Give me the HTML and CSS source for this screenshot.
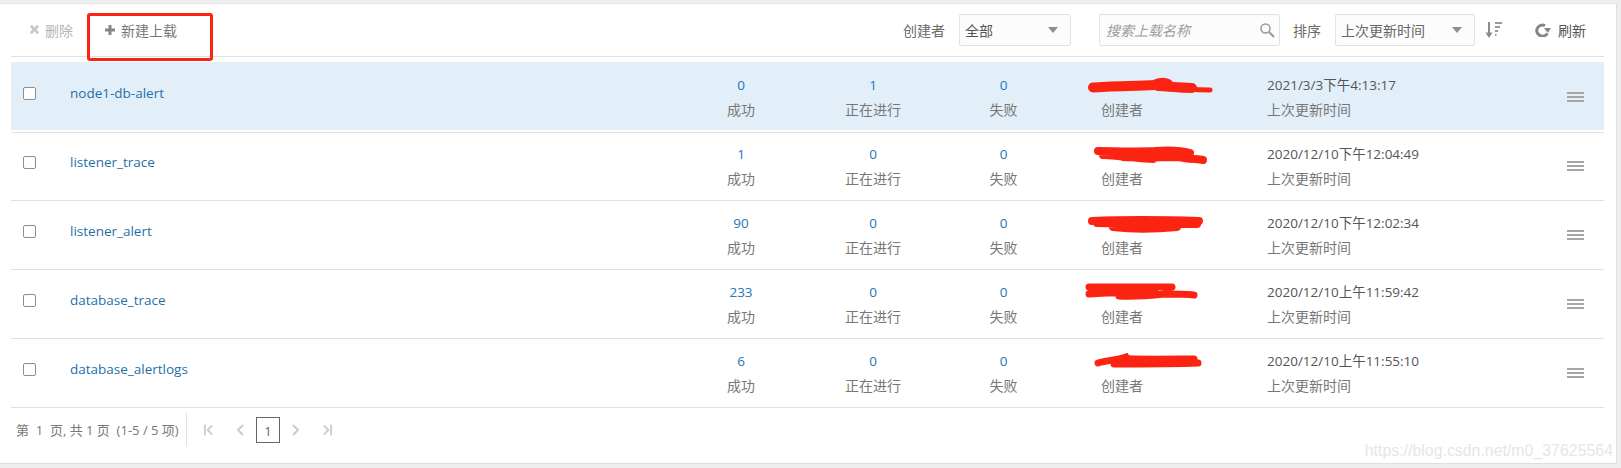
FILE: index.html
```html
<!DOCTYPE html>
<html lang="zh">
<head>
<meta charset="utf-8">
<title>上载</title>
<link rel="stylesheet" href="styles.css">
</head>
<body>
<main class="panel">
  <header class="toolbar">
    <button class="tool tool-delete"><svg class="ico" viewBox="0 0 12 12" width="11" height="11"><path d="M2 2l8 8M10 2l-8 8" stroke="#c8c8c8" stroke-width="3"/></svg>删除</button>
    <button class="tool tool-new"><svg class="ico" viewBox="0 0 12 12" width="12" height="12"><path d="M6 1v10M1 6h10" stroke="#858585" stroke-width="3"/></svg>新建上载</button>
    <div class="spacer"></div>
    <label class="flabel">创建者</label>
    <div class="select select-owner"><span>全部</span><i class="caret"></i></div>
    <div class="search"><span>搜索上载名称</span><svg viewBox="0 0 16 16" width="16" height="16"><circle cx="6.5" cy="6.5" r="4.5" fill="none" stroke="#999" stroke-width="1.5"/><path d="M10 10l5 5" stroke="#999" stroke-width="2"/></svg></div>
    <label class="flabel flabel-sort">排序</label>
    <div class="select select-sort"><span>上次更新时间</span><i class="caret"></i></div>
    <svg class="sort-ico" viewBox="0 0 17 18" width="17" height="18"><path d="M4 1v13" stroke="#8a8a8a" stroke-width="2"/><path d="M0.5 11.5h7L4 17z" fill="#8a8a8a"/><path d="M10 2h7M10 6h5M10 10h3M10 14h1.5" stroke="#999" stroke-width="2"/></svg>
    <button class="tool tool-refresh"><svg class="ico" viewBox="0 0 16 14" width="16" height="14"><path d="M12.5 10.5A5.8 5.5 0 1 1 10 2.6" fill="none" stroke="#858585" stroke-width="3"/><path d="M9 5h7L12.8 10z" fill="#858585"/></svg>刷新</button>
  </header>

  <section class="list">
    <article class="row row-active">
      <div class="cell-check"><i class="checkbox"></i></div>
      <a class="name">node1-db-alert</a>
      <div class="stat"><b>0</b><span>成功</span></div>
      <div class="stat"><b>1</b><span>正在进行</span></div>
      <div class="stat"><b>0</b><span>失败</span></div>
      <div class="owner"><svg class="scribble s1" viewBox="0 0 126 16" width="126" height="16"><path d="M5 10.500C20 9 50 9 66 8C72 5 76 5 80 7M70 9C85 10 95 11 104 11" fill="none" stroke="#fb2413" stroke-width="10" stroke-linecap="round"/><path d="M100 12C110 13 118 13 122 13" fill="none" stroke="#fb2413" stroke-width="5" stroke-linecap="round"/></svg><b>&nbsp;</b><span>创建者</span></div>
      <div class="date"><b>2021/3/3下午4:13:17</b><span>上次更新时间</span></div>
      <div class="menu"><i></i></div>
    </article>
    <article class="row">
      <div class="cell-check"><i class="checkbox"></i></div>
      <a class="name">listener_trace</a>
      <div class="stat"><b>1</b><span>成功</span></div>
      <div class="stat"><b>0</b><span>正在进行</span></div>
      <div class="stat"><b>0</b><span>失败</span></div>
      <div class="owner"><svg class="scribble s2" viewBox="0 0 116 19" width="116" height="19"><path d="M5 5C20 5 40 6 62 5C75 4 90 5 97 7M10 9C30 10 50 13 60 13M30 11C50 12 70 11 85 11C95 13 105 13 110 14" fill="none" stroke="#fb2413" stroke-width="8" stroke-linecap="round"/></svg><b>&nbsp;</b><span>创建者</span></div>
      <div class="date"><b>2020/12/10下午12:04:49</b><span>上次更新时间</span></div>
      <div class="menu"><i></i></div>
    </article>
    <article class="row">
      <div class="cell-check"><i class="checkbox"></i></div>
      <a class="name">listener_alert</a>
      <div class="stat"><b>90</b><span>成功</span></div>
      <div class="stat"><b>0</b><span>正在进行</span></div>
      <div class="stat"><b>0</b><span>失败</span></div>
      <div class="owner"><svg class="scribble s3" viewBox="0 0 118 19" width="118" height="19"><path d="M5 6C30 5 80 5 112 6M10 8C50 9 80 9 110 9M26 12C50 15 70 14 90 12" fill="none" stroke="#fb2413" stroke-width="8" stroke-linecap="round"/></svg><b>&nbsp;</b><span>创建者</span></div>
      <div class="date"><b>2020/12/10下午12:02:34</b><span>上次更新时间</span></div>
      <div class="menu"><i></i></div>
    </article>
    <article class="row">
      <div class="cell-check"><i class="checkbox"></i></div>
      <a class="name">database_trace</a>
      <div class="stat"><b>233</b><span>成功</span></div>
      <div class="stat"><b>0</b><span>正在进行</span></div>
      <div class="stat"><b>0</b><span>失败</span></div>
      <div class="owner"><svg class="scribble s4" viewBox="0 0 113 18" width="113" height="18"><path d="M4 4C30 4 60 4 87 4M4 11C30 9 50 10 70 9M34 13C50 14 60 13 80 11C90 11 100 11 109 12" fill="none" stroke="#fb2413" stroke-width="7" stroke-linecap="round"/></svg><b>&nbsp;</b><span>创建者</span></div>
      <div class="date"><b>2020/12/10上午11:59:42</b><span>上次更新时间</span></div>
      <div class="menu"><i></i></div>
    </article>
    <article class="row">
      <div class="cell-check"><i class="checkbox"></i></div>
      <a class="name">database_alertlogs</a>
      <div class="stat"><b>6</b><span>成功</span></div>
      <div class="stat"><b>0</b><span>正在进行</span></div>
      <div class="stat"><b>0</b><span>失败</span></div>
      <div class="owner"><svg class="scribble s5" viewBox="0 0 110 15" width="110" height="15"><path d="M4 10C14 7 24 7 32 4C34 7 80 6 100 6M104 10C80 11 50 11 20 11" fill="none" stroke="#fb2413" stroke-width="7" stroke-linecap="round"/></svg><b>&nbsp;</b><span>创建者</span></div>
      <div class="date"><b>2020/12/10上午11:55:10</b><span>上次更新时间</span></div>
      <div class="menu"><i></i></div>
    </article>
  </section>

  <footer class="pager">
    <span class="pager-text">第&nbsp; 1&nbsp; 页, 共 1 页&nbsp; (1-5 / 5 项)</span>
    <i class="pager-sep"></i>
    <svg class="pg pg-first" viewBox="0 0 10 12" width="9" height="12"><path d="M1 0v12" stroke="#ccc" stroke-width="2"/><path d="M9 1L4 6l5 5" fill="none" stroke="#ccc" stroke-width="2"/></svg>
    <svg class="pg pg-prev" viewBox="0 0 7 12" width="7" height="12"><path d="M6 1L1 6l5 5" fill="none" stroke="#ccc" stroke-width="2"/></svg>
    <span class="pg-current">1</span>
    <svg class="pg pg-next" viewBox="0 0 7 12" width="7" height="12"><path d="M1 1l5 5-5 5" fill="none" stroke="#ccc" stroke-width="2"/></svg>
    <svg class="pg pg-last" viewBox="0 0 10 12" width="9" height="12"><path d="M9 0v12" stroke="#ccc" stroke-width="2"/><path d="M1 1l5 5-5 5" fill="none" stroke="#ccc" stroke-width="2"/></svg>
  </footer>

  <div class="highlight-box"></div>
  <div class="watermark">https://blog.csdn.net/m0_37625564</div>
</main>
</body>
</html>
```
FILE: styles.css
```css
* { box-sizing: border-box; }
html, body { margin: 0; height: 100%; }
body {
  background: #eeeeee;
  font-family: "Open Sans", "Noto Sans CJK SC", sans-serif;
  font-size: 13.5px;
  color: #6e6e6e;
  overflow: hidden;
}
.panel {
  position: relative;
  width: 1617px;
  height: 461px;
  margin-top: 3px;
  padding: 0 12px 0 11px;
  background: #fff;
  border-right: 1px solid #dedede;
  border-bottom: 1px solid #dedede;
  border-top: 1px solid #e4e4e4;
}
.toolbar {
  display: flex;
  align-items: center;
  height: 53px;
  padding-bottom: 1px;
  border-bottom: 1px solid #e0e0e0;
  font-size: 14px;
}
.tool {
  display: flex;
  align-items: center;
  padding: 0;
  border: 0;
  background: none;
  font: inherit;
  color: #555;
}
.ico { margin-right: 5px; }
.tool-delete { margin-left: 18px; color: #b5b5b5; }
.tool-new { margin-left: 31px; color: #777; }
.spacer { flex: 1; }
.flabel { color: #6a6a6a; }
.select, .search {
  display: flex;
  align-items: center;
  height: 32px;
  border: 1px solid #e2e2e2;
  border-radius: 2px;
  background: #fcfcfc;
}
.select { justify-content: space-between; padding: 0 12px 0 5px; color: #555; }
.select-owner { width: 112px; margin-left: 14px; }
.select-sort { width: 140px; margin-left: 14px; color: #666; }
.caret {
  width: 0;
  height: 0;
  border-left: 5px solid transparent;
  border-right: 5px solid transparent;
  border-top: 6px solid #8e8e8e;
}
.search {
  width: 181px;
  margin-left: 28px;
  padding: 0 4px 0 6px;
  justify-content: space-between;
  font-style: italic;
  color: #9b9b9b;
}
.flabel-sort { margin-left: 13px; }
.sort-ico { margin-left: 10px; }
.tool-refresh { margin-left: 33px; margin-right: 18px; }
.tool-refresh .ico { margin-right: 7px; }

.list { margin-top: 5px; }
.row {
  display: grid;
  grid-template-columns: 59px 606px 130px 134px 127px 200px 1fr auto;
  align-items: center;
  height: 69px;
  border-bottom: 1px solid #e0e0e0;
}
.row-active {
  background: #e2eff9;
  height: 70px;
  padding-top: 2px;
  border-bottom: 2px solid #fff;
  box-shadow: 0 1px 0 #e0e0e0;
}
.cell-check { padding-left: 12px; padding-bottom: 8px; display: flex; }
.checkbox {
  width: 13px;
  height: 13px;
  border: 1px solid #8d8d8d;
  border-radius: 2px;
  background: #fff;
}
.name { padding-bottom: 8px; color: #1f6fa8; }
.stat, .owner, .date {
  display: flex;
  flex-direction: column;
  gap: 5px;
  line-height: 19px;
}
.stat { align-items: center; }
.stat b { font-weight: 400; color: #2376b7; }
.stat span, .owner span, .date span { color: #777; font-size: 14px; }
.owner { position: relative; padding-left: 34px; }
.owner b { font-weight: 400; }
.date b { font-weight: 400; color: #555; }
.scribble { position: absolute; }
.s1 { left: 21px; top: 1px; }
.s2 { left: 26px; top: 1px; }
.s3 { left: 20px; top: 1px; }
.s4 { left: 18px; top: 0; }
.s5 { left: 27px; top: 1px; }
.menu { padding-right: 20px; }
.menu i {
  display: block;
  position: relative;
  width: 17px;
  height: 10px;
  border-top: 2px solid #a6a6a6;
  border-bottom: 2px solid #a6a6a6;
}
.menu i::after {
  content: "";
  position: absolute;
  left: 0;
  right: 0;
  top: 2px;
  height: 2px;
  background: #a6a6a6;
}
.pager {
  display: flex;
  align-items: center;
  height: 43px;
  padding-left: 5px;
  font-size: 13px;
  color: #777;
}
.pager-text { width: 170px; white-space: nowrap; }
.pager-sep { width: 1px; height: 33px; background: #e0e0e0; }
.pg { flex: none; }
.pg-first { margin-left: 17px; }
.pg-prev { margin-left: 24px; }
.pg-current {
  width: 24px;
  height: 26px;
  margin-left: 12px;
  border: 1px solid #666;
  text-align: center;
  line-height: 26px;
  color: #666;
}
.pg-next { margin-left: 12px; }
.pg-last { margin-left: 24px; }

.highlight-box {
  position: absolute;
  left: 87px;
  top: 9px;
  width: 126px;
  height: 48px;
  border: 3px solid #fb2413;
  border-radius: 3px;
}
.watermark {
  position: absolute;
  right: 3px;
  bottom: 3px;
  font-family: "Liberation Sans", sans-serif;
  font-size: 15.9px;
  color: #e6e6e6;
}
```
